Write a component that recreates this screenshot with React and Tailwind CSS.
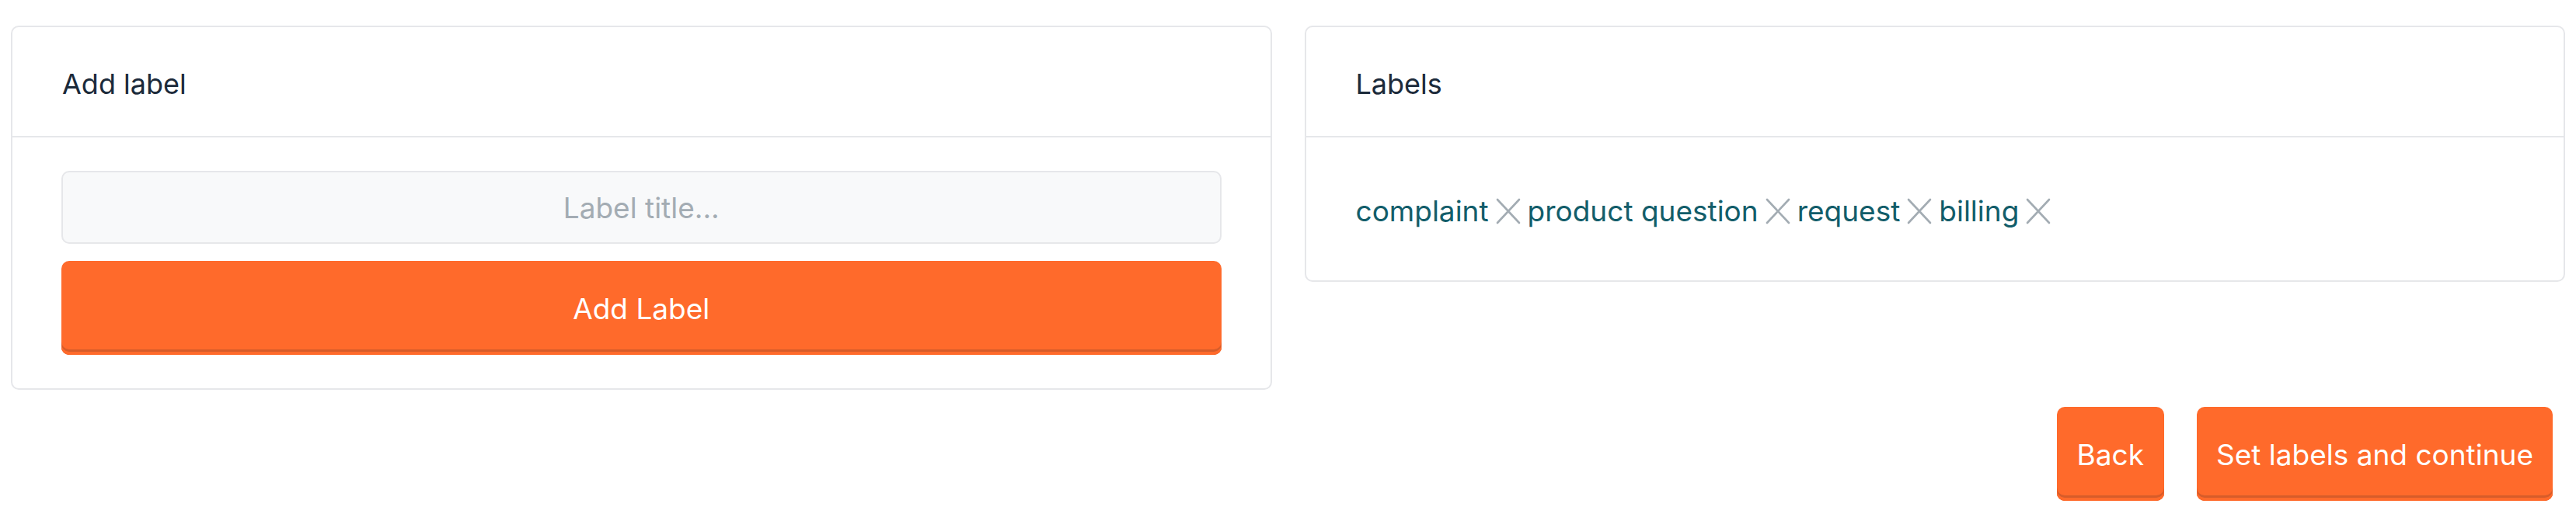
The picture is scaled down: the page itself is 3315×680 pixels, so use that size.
import { useState } from 'react';

const initialLabels = ['complaint', 'product question', 'request', 'billing'];

function CloseGlyph() {
    return (
        <svg width="32" height="34" viewBox="0 0 32 34" fill="none" className="shrink-0">
            <path d="M2 2 30 32M30 2 2 32" stroke="#a3acb3" strokeWidth="2.6" strokeLinecap="round" />
        </svg>
    );
}

function Card({ title, children, bodyClass }) {
    return (
        <div className="bg-white border-2 border-[#e6e7ea] rounded-[10px]">
            <div className="h-[142px] flex items-center pt-[6px] px-[64px] border-b-2 border-[#e6e7ea] text-[36px] text-[#1b2a3a]">
                {title}
            </div>
            <div className={bodyClass}>{children}</div>
        </div>
    );
}

export default function App() {
    const [labels, setLabels] = useState(initialLabels);
    const [title, setTitle] = useState('');

    const addLabel = () => {
        if (!title.trim()) return;
        setLabels([...labels, title.trim()]);
        setTitle('');
    };

    const orangeBtn =
        'bg-[#ff6a2b] text-white rounded-[10px] shadow-[inset_0_-4px_0_0_#ff6a2b,inset_0_-7px_0_0_#d65c2a]';

    return (
        <div className="min-h-screen bg-white px-[14px] pt-[33px] font-['Inter',sans-serif]">
            <div className="grid grid-cols-2 gap-[42px] items-start">
                <Card title="Add label" bodyClass="px-[63px] pt-[43px] pb-[43px] flex flex-col gap-[22px]">
                    <input
                        value={title}
                        onChange={e => setTitle(e.target.value)}
                        placeholder="Label title..."
                        className="h-[94px] w-full border-2 border-[#e6e7ea] rounded-[10px] bg-[#f8f9fa] text-center text-[37px] text-[#1b2a3a] placeholder:text-[#a3acb3] outline-none"
                    />
                    <button onClick={addLabel} className={`${orangeBtn} h-[121px] w-full pt-[3px] text-[37px]`}>
                        Add Label
                    </button>
                </Card>

                <Card title="Labels" bodyClass="h-[184px] px-[64px] pt-[6px] flex items-center flex-wrap">
                    {labels.map(label => (
                        <span key={label} className="flex items-center text-[37px] text-[#125d6a]">
                            {label}
                            <button
                                onClick={() => setLabels(labels.filter(l => l !== label))}
                                className="mx-[9px] flex items-center"
                            >
                                <CloseGlyph />
                            </button>
                        </span>
                    ))}
                </Card>
            </div>

            <div className="flex justify-end gap-[42px] mt-[22px] pr-[16px]">
                <button className={`${orangeBtn} h-[121px] px-[26px] pt-[3px] text-[37px]`}>Back</button>
                <button className={`${orangeBtn} h-[121px] px-[25px] pt-[3px] text-[37px]`}>Set labels and continue</button>
            </div>
        </div>
    );
}
